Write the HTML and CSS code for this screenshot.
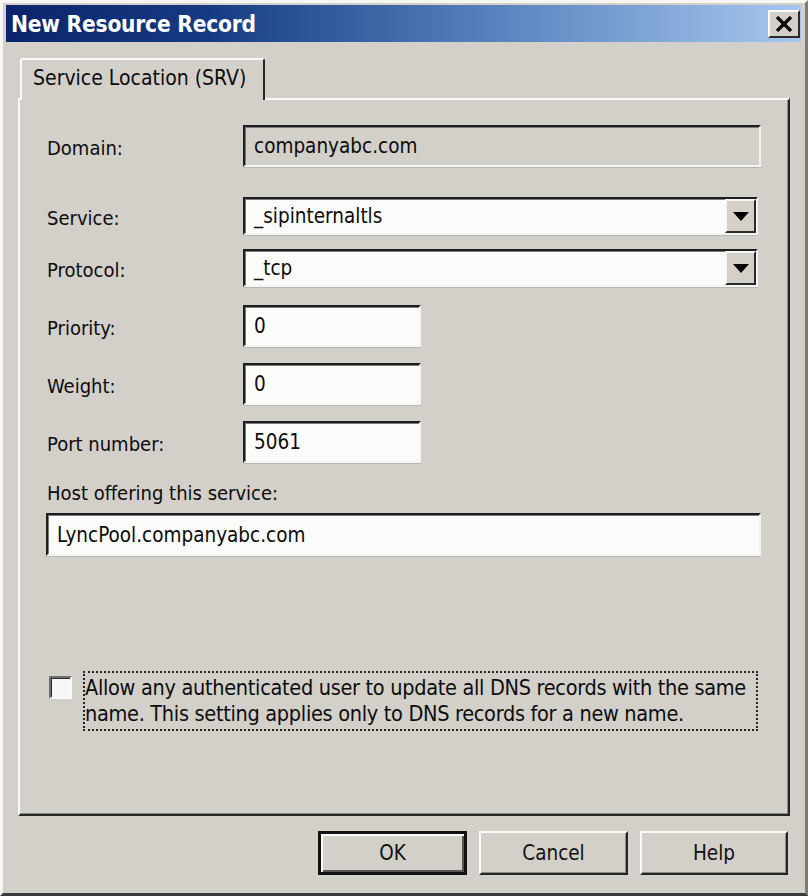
FILE: index.html
```html
<!DOCTYPE html>
<html>
<head>
<meta charset="utf-8">
<title>New Resource Record</title>
<link rel="stylesheet" href="styles.css">
</head>
<body>
<div class="window">
  <div class="titlebar">
    <span class="title">New Resource Record</span>
    <span class="close">
      <svg width="18" height="16" viewBox="0 0 18 16"><path d="M2 1 L16 15 M16 1 L2 15" stroke="#000" stroke-width="3.2" fill="none"/></svg>
    </span>
  </div>
  <div class="content">
    <div class="tabs"><div class="tab">Service Location (SRV)</div></div>
    <div class="panel">
      <div class="row row-domain">
        <span class="label">Domain:</span>
        <div class="field readonly">companyabc.com</div>
      </div>
      <div class="row row-service">
        <span class="label">Service:</span>
        <div class="field combo"><span class="val">_sipinternaltls</span><span class="drop"><span class="arrow"></span></span></div>
      </div>
      <div class="row row-protocol">
        <span class="label">Protocol:</span>
        <div class="field combo"><span class="val">_tcp</span><span class="drop"><span class="arrow"></span></span></div>
      </div>
      <div class="row row-num">
        <span class="label">Priority:</span>
        <div class="field short">0</div>
      </div>
      <div class="row row-num">
        <span class="label">Weight:</span>
        <div class="field short">0</div>
      </div>
      <div class="row row-num">
        <span class="label">Port number:</span>
        <div class="field short">5061</div>
      </div>
      <div class="host-label">Host offering this service:</div>
      <div class="field host">LyncPool.companyabc.com</div>
      <div class="check-row">
        <span class="checkbox"></span>
        <span class="check-text">Allow any authenticated user to update all DNS records with the same<br>name. This setting applies only to DNS records for a new name.</span>
      </div>
    </div>
    <div class="buttons">
      <button class="btn default">OK</button>
      <button class="btn">Cancel</button>
      <button class="btn help">Help</button>
    </div>
  </div>
</div>
</body>
</html>
```
FILE: styles.css
```css
* { box-sizing: border-box; }
html, body { margin: 0; padding: 0; }
body {
  width: 808px;
  height: 896px;
  overflow: hidden;
  background: #d4d1ca;
  font-family: "DejaVu Sans Condensed", "DejaVu Sans", sans-serif;
  color: #0c0c0c;
}
.window {
  width: 808px;
  height: 896px;
  background: #d3d0c9;
  border-top: 3px solid #f6f6f2;
  border-left: 3px solid #f6f6f2;
  border-right: 3px solid #7d7b76;
  border-bottom: 3px solid #3a3a3a;
  display: flex;
  flex-direction: column;
}
.titlebar {
  margin: 2px 4px 0 3px;
  height: 37px;
  background: linear-gradient(to right, #0b246b 0%, #163a82 25%, #5580bd 60%, #a7c7ee 100%);
  display: flex;
  align-items: center;
  justify-content: space-between;
  padding: 0 1px 0 5px;
}
.title {
  color: #fff;
  font-weight: bold;
  font-size: 22.5px;
  letter-spacing: -0.2px;
}
.close {
  width: 32px;
  height: 28px;
  background: #d4d0c8;
  border-top: 2px solid #fafafa;
  border-left: 2px solid #fafafa;
  border-right: 2px solid #2a2a2a;
  border-bottom: 2px solid #2a2a2a;
  display: flex;
  align-items: center;
  justify-content: center;
}
.content {
  flex: 1;
  padding: 16px 0 0 15px;
  display: flex;
  flex-direction: column;
}
.tabs { display: flex; }
.tab {
  position: relative;
  z-index: 1;
  margin-left: 2px;
  margin-bottom: -2px;
  width: 245px;
  height: 42px;
  background: #d3d0c9;
  border-top: 2px solid #fafaf8;
  border-left: 2px solid #fafaf8;
  border-right: 2px solid #262626;
  border-radius: 3px 3px 0 0;
  font-size: 21px;
  padding: 6px 0 0 11px;
}
.panel {
  width: 772px;
  height: 718px;
  border-top: 2px solid #fafaf8;
  border-left: 2px solid #fafaf8;
  border-right: 2px solid #262626;
  border-bottom: 2px solid #262626;
  box-shadow: inset -1px -1px #8c8a85;
  padding: 25px 27px 0 27px;
  display: flex;
  flex-direction: column;
}
.row {
  display: grid;
  grid-template-columns: 196px 1fr;
  align-items: center;
}
.label { font-size: 20px; padding-top: 3px; }
.field {
  height: 42px;
  background: #fbfbfa;
  border-top: 2px solid #1e1e1e;
  border-left: 2px solid #1e1e1e;
  border-right: 2px solid #f4f4f2;
  border-bottom: 2px solid #f4f4f2;
  box-shadow: inset 1px 1px #7a7a7a, 0 1px #b9b7b2;
  font-size: 20.5px;
  display: flex;
  align-items: center;
  padding-left: 9px;
}
.readonly { background: #d3d0c9; }
.row-service { margin-top: 30px; }
.row-protocol { margin-top: 14px; }
.row-service .field, .row-protocol .field { height: 38px; margin-right: 3px; }
.row-service + .row-protocol + .row-num { margin-top: 18px; }
.row-num { margin-top: 16px; }
.combo { padding-right: 0; justify-content: space-between; }
.drop {
  width: 31px;
  height: 100%;
  background: #d4d0c8;
  border-top: 2px solid #f6f6f4;
  border-left: 2px solid #f6f6f4;
  border-right: 2px solid #2a2a2a;
  border-bottom: 2px solid #2a2a2a;
  display: flex;
  align-items: center;
  justify-content: center;
}
.arrow {
  width: 0;
  height: 0;
  border-left: 8px solid transparent;
  border-right: 8px solid transparent;
  border-top: 9px solid #000;
}
.short { width: 178px; }
.host-label {
  font-size: 20px;
  margin-top: 18px;
  line-height: 24px;
}
.host {
  margin-top: 8px;
  margin-left: -1px;
  height: 43px;
}
.check-row {
  margin-top: 115px;
  display: flex;
  align-items: flex-start;
  margin-left: 2px;
}
.checkbox {
  width: 23px;
  height: 23px;
  margin-top: 5px;
  background: #f7f7f5;
  border-top: 2px solid #6f6f6f;
  border-left: 2px solid #6f6f6f;
  border-right: 2px solid #fafafa;
  border-bottom: 2px solid #fafafa;
  box-shadow: inset 1px 1px #2a2a2a;
}
.check-text {
  margin-left: 11px;
  width: 675px;
  border: 2px dotted #222;
  font-size: 21.5px;
  line-height: 26px;
  padding: 2px 0 2px 0;
  letter-spacing: -0.3px;
  white-space: nowrap;
  overflow: hidden;
}
.buttons {
  display: flex;
  justify-content: flex-end;
  gap: 12px;
  width: 770px;
  margin-top: 15px;
}
.btn {
  width: 149px;
  height: 44px;
  background: #d3d0c9;
  border-top: 2px solid #fafaf8;
  border-left: 2px solid #fafaf8;
  border-right: 2px solid #262626;
  border-bottom: 2px solid #262626;
  box-shadow: inset -1px -1px #8c8a85;
  font-family: "DejaVu Sans Condensed", "DejaVu Sans", sans-serif;
  font-size: 20.5px;
  color: #111;
  padding: 0;
}
.btn.default {
  border: 3px solid #111;
  box-shadow: inset 2px 2px #fafaf8, inset -2px -2px #555;
}
.help { width: 148px; }
```
